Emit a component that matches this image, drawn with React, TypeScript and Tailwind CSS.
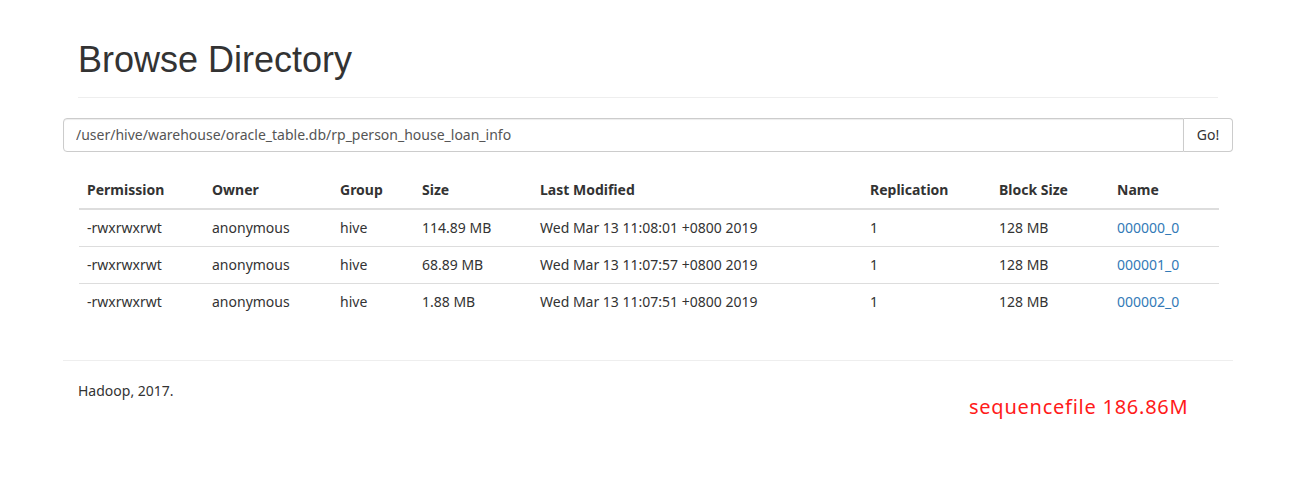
import React from "react";

const rows = [
  { perm: "-rwxrwxrwt", owner: "anonymous", group: "hive", size: "114.89 MB", modified: "Wed Mar 13 11:08:01 +0800 2019", repl: "1", block: "128 MB", name: "000000_0" },
  { perm: "-rwxrwxrwt", owner: "anonymous", group: "hive", size: "68.89 MB", modified: "Wed Mar 13 11:07:57 +0800 2019", repl: "1", block: "128 MB", name: "000001_0" },
  { perm: "-rwxrwxrwt", owner: "anonymous", group: "hive", size: "1.88 MB", modified: "Wed Mar 13 11:07:51 +0800 2019", repl: "1", block: "128 MB", name: "000002_0" },
];

const cols = [
  { label: "Permission", w: "w-[125px]" },
  { label: "Owner", w: "w-[128px]" },
  { label: "Group", w: "w-[82px]" },
  { label: "Size", w: "w-[118px]" },
  { label: "Last Modified", w: "w-[330px]" },
  { label: "Replication", w: "w-[129px]" },
  { label: "Block Size", w: "w-[118px]" },
  { label: "Name", w: "w-[110px]" },
];

export default function App() {
  return (
    <div className="min-h-[481px] bg-white text-[#333] text-[14px] leading-[20px] font-['Noto_Sans',sans-serif]">
      <div className="ml-[63px] w-[1170px]">
        <div className="px-[15px]">
          <div className="pt-[40px] pb-[9px] border-b border-[#eee]">
            <h1 className="text-[36px] leading-[39.6px] mb-[8px] font-['Liberation_Sans',Arial,sans-serif] font-normal">
              Browse Directory
            </h1>
          </div>
        </div>

        <div className="mt-[20px] flex h-[34px]">
          <input
            className="flex-1 h-[34px] px-[12px] border border-[#ccc] rounded-l-[4px] text-[#555] text-[14px] outline-none shadow-[inset_0_1px_1px_rgba(0,0,0,0.075)]"
            defaultValue="/user/hive/warehouse/oracle_table.db/rp_person_house_loan_info"
          />
          <button className="w-[49px] h-[34px] border border-l-0 border-[#ccc] rounded-r-[4px] bg-white text-[#333] text-[14px]">
            Go!
          </button>
        </div>

        <div className="pl-[16px] pr-[15px] mt-[20px]">
          <table className="w-full table-fixed border-collapse">
            <thead>
              <tr className="border-b-2 border-[#ddd]">
                {cols.map((c) => (
                  <th key={c.label} className={`${c.w} p-[8px] text-left font-bold`}>
                    {c.label}
                  </th>
                ))}
              </tr>
            </thead>
            <tbody>
              {rows.map((r, i) => (
                <tr key={r.name} className={i > 0 ? "border-t border-[#ddd]" : ""}>
                  <td className="p-[8px]">{r.perm}</td>
                  <td className="p-[8px]">{r.owner}</td>
                  <td className="p-[8px]">{r.group}</td>
                  <td className="p-[8px]">{r.size}</td>
                  <td className="p-[8px]">{r.modified}</td>
                  <td className="p-[8px]">{r.repl}</td>
                  <td className="p-[8px]">{r.block}</td>
                  <td className="p-[8px]">
                    <a href="#" className="text-[#337ab7]">{r.name}</a>
                  </td>
                </tr>
              ))}
            </tbody>
          </table>
        </div>

        <hr className="mt-[40px] border-t border-[#eee]" />

        <div className="px-[15px] pt-[20px] flex">
          <p className="w-[891px]">Hadoop, 2017.</p>
          <p className="mt-[12px] text-[20px] leading-[28px] tracking-[0.75px] text-[#ff1a1a]">sequencefile 186.86M</p>
        </div>
      </div>
    </div>
  );
}
